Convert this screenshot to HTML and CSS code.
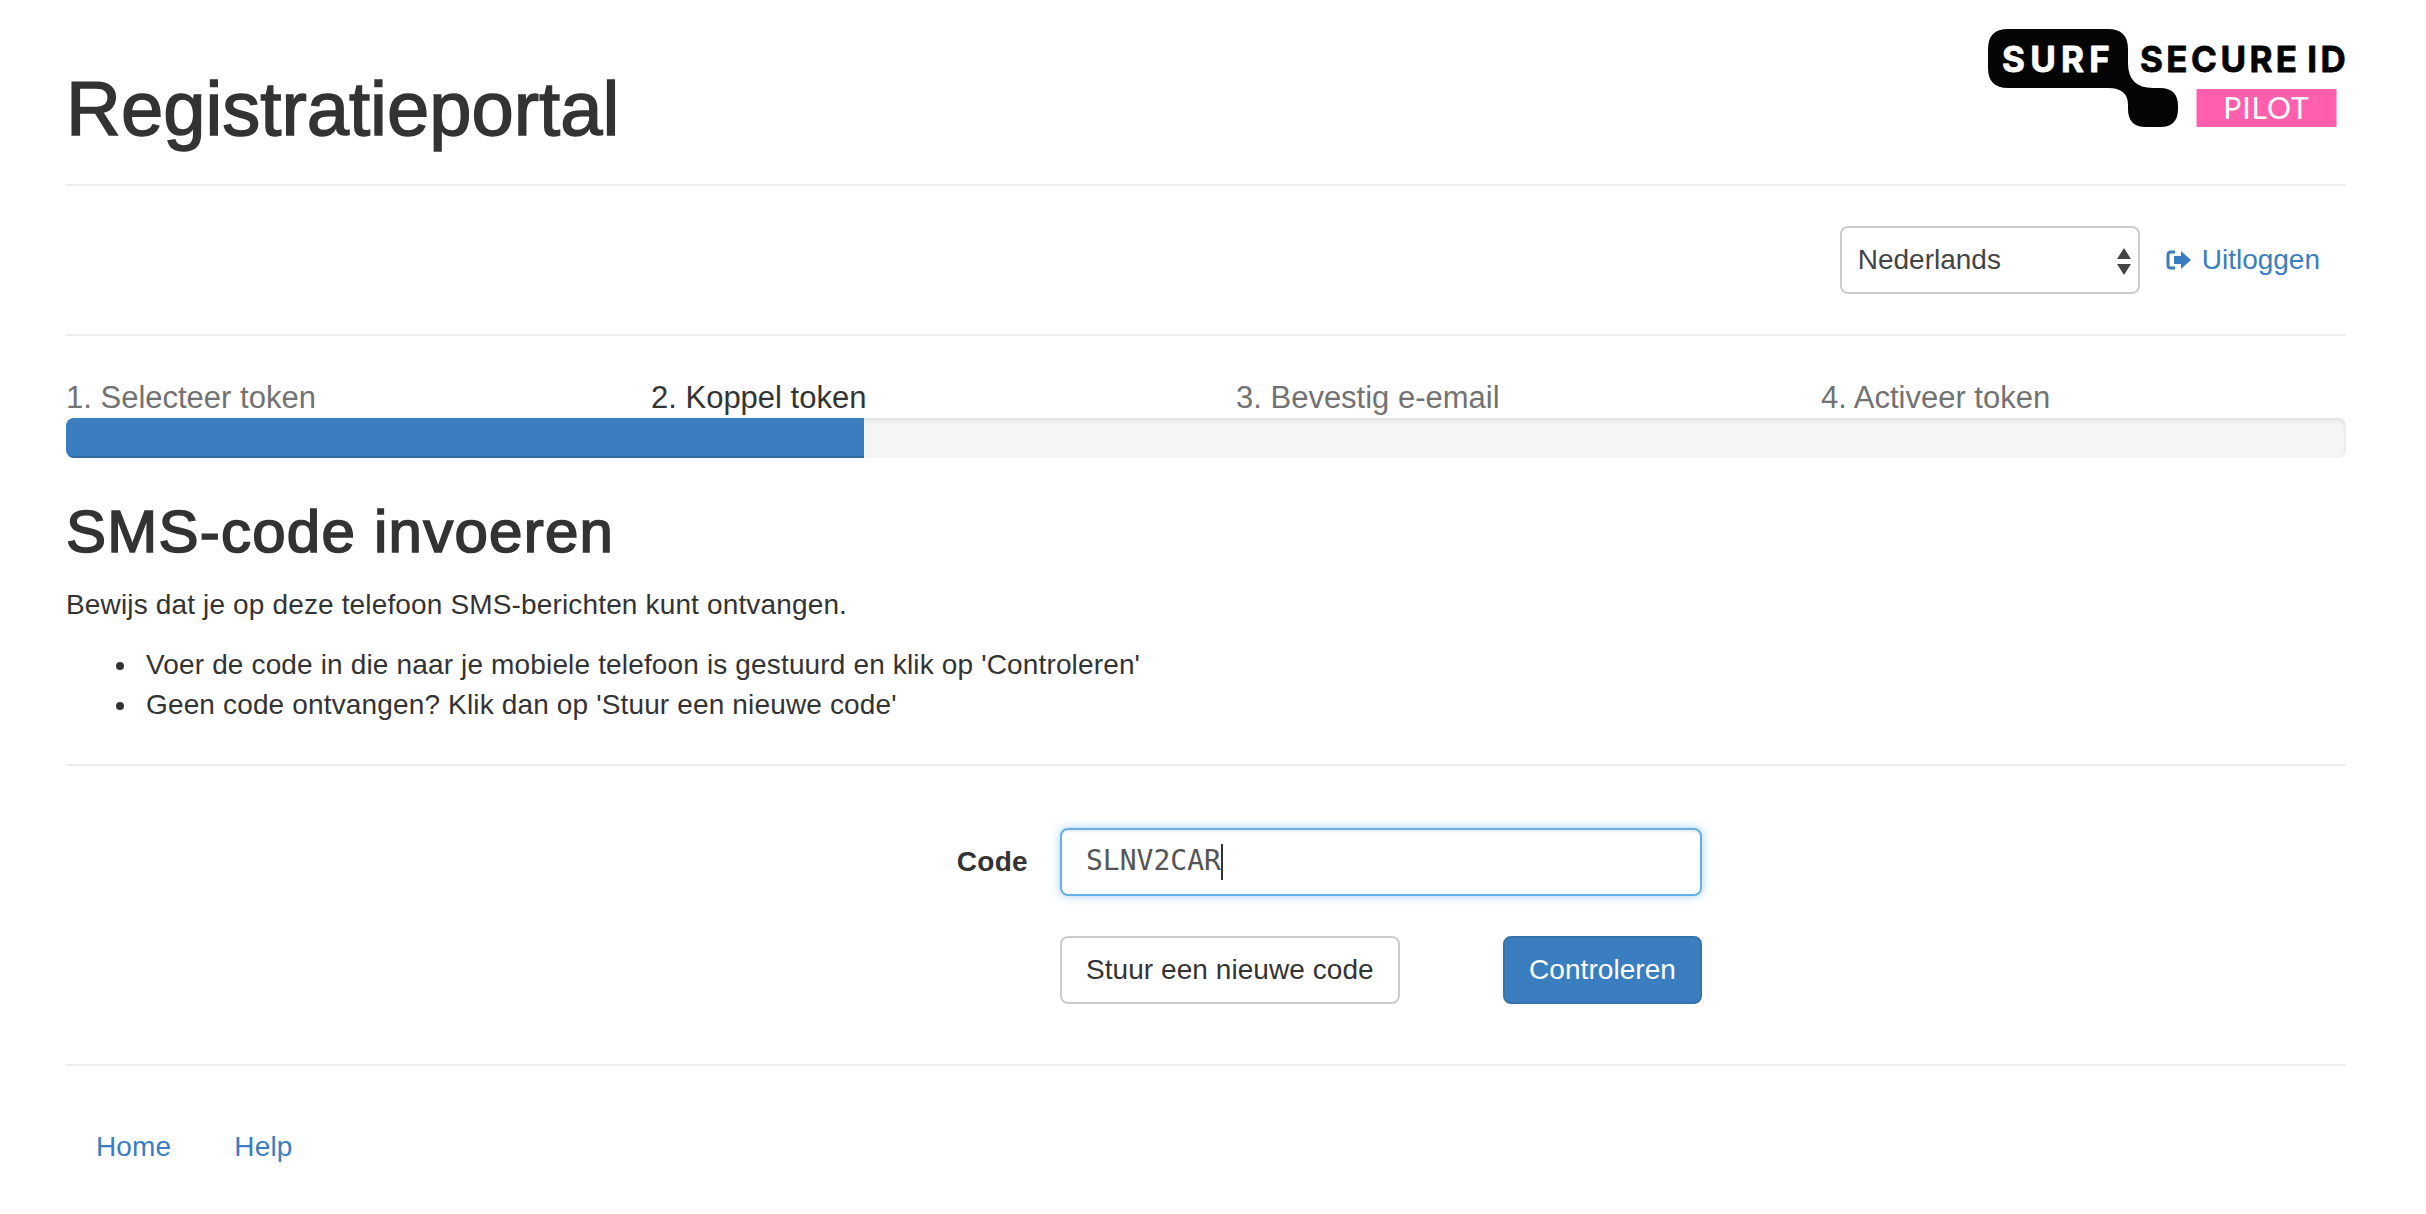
FILE: index.html
```html
<!DOCTYPE html>
<html lang="nl">
<head>
<meta charset="utf-8">
<title>Registratieportal</title>
<link rel="stylesheet" href="styles.css">
</head>
<body>
<div class="container">
  <header class="page-header">
    <h1 class="title">Registratieportal</h1>
    <svg class="logo" viewBox="0 0 360 100" width="360" height="100" role="img" aria-label="SURF Secure ID Pilot">
      <path class="logo-black" d="M22 0H122Q142 0 142 20V34Q142 59 167 59H174Q192 59 192 77V80Q192 98 174 98H160Q142 98 142 80V76Q142 59 122 59H22Q2 59 2 39V20Q2 0 22 0Z"/>
      <text class="logo-surf" x="16" y="43" textLength="108">SURF</text>
      <text class="logo-secure" x="154" y="43" textLength="206">SECURE ID</text>
      <rect class="logo-pink" x="210.5" y="60" width="140" height="38"/>
      <text class="logo-pilot" x="280.5" y="90">PILOT</text>
    </svg>
  </header>

  <nav class="account-bar">
    <div class="select-wrap">
      <select class="lang-select"><option>Nederlands</option><option>English</option></select>
      <span class="select-up"></span>
      <span class="select-down"></span>
    </div>
    <a class="logout" href="#">
      <svg class="logout-icon" viewBox="0 0 26 20" width="26" height="20">
        <path d="M9 2H5Q2 2 2 5V15Q2 18 5 18H9" fill="none" stroke="currentColor" stroke-width="3"/>
        <path d="M8 6H15V1L25 10L15 19V14H8Z" fill="currentColor"/>
      </svg>
      Uitloggen
    </a>
  </nav>

  <section class="steps">
    <div class="step-labels">
      <span class="step">1. Selecteer token</span>
      <span class="step active">2. Koppel token</span>
      <span class="step">3. Bevestig e-email</span>
      <span class="step">4. Activeer token</span>
    </div>
    <div class="progress"><div class="progress-bar"></div></div>
  </section>

  <h2 class="subtitle">SMS-code invoeren</h2>
  <p class="intro">Bewijs dat je op deze telefoon SMS-berichten kunt ontvangen.</p>
  <ul class="hints">
    <li>Voer de code in die naar je mobiele telefoon is gestuurd en klik op 'Controleren'</li>
    <li>Geen code ontvangen? Klik dan op 'Stuur een nieuwe code'</li>
  </ul>

  <form class="code-form">
    <label class="code-label" for="code">Code</label>
    <div class="input-wrap">
      <input class="code-input" id="code" type="text" value="SLNV2CAR">
      <span class="caret"></span>
    </div>
    <div class="actions">
      <button class="btn" type="button">Stuur een nieuwe code</button>
      <button class="btn btn-primary" type="button">Controleren</button>
    </div>
  </form>

  <footer class="page-footer">
    <a href="#">Home</a>
    <a href="#">Help</a>
  </footer>
</div>
</body>
</html>
```
FILE: styles.css
```css
* { box-sizing: border-box; }
html, body { margin: 0; padding: 0; background: #fff; }
body {
  font-family: "Liberation Sans", Arial, sans-serif;
  font-size: 28px;
  line-height: 40px;
  letter-spacing: 0.15px;
  color: #333;
  overflow: hidden;
}
a { color: #3a7ebf; text-decoration: none; }
.container { padding: 0 80px 0 66px; }

.page-header {
  height: 186px;
  border-bottom: 2px solid #eee;
  display: flex;
  justify-content: space-between;
  align-items: flex-start;
}
.title {
  margin: 69px 0 0;
  font-size: 76px;
  line-height: 80px;
  font-weight: 400;
  letter-spacing: 0;
  -webkit-text-stroke: 1.5px #333;
}
.logo { margin-top: 29px; flex: none; }
.logo-black { fill: #050505; }
.logo-surf { fill: #fff; stroke: #fff; stroke-width: 0.8px; stroke-linejoin: round; font: 700 35px "Inter", sans-serif; }
.logo-secure { fill: #050505; stroke: #050505; stroke-width: 0.8px; stroke-linejoin: round; font: 700 35px "Inter", sans-serif; word-spacing: -5px; }
.logo-pink { fill: #ff5fac; }
.logo-pilot { fill: #fff; font: 400 30px "Lato", sans-serif; text-anchor: middle; letter-spacing: 1px; }

.account-bar {
  height: 150px;
  border-bottom: 2px solid #eee;
  display: flex;
  justify-content: flex-end;
  align-items: center;
  gap: 26px;
  padding: 0 26px 0 0;
}
.select-wrap { position: relative; width: 300px; height: 68px; }
.lang-select {
  appearance: none;
  -webkit-appearance: none;
  width: 100%;
  height: 100%;
  padding: 0 16px;
  border: 2px solid #ccc;
  border-radius: 8px;
  background: #fff;
  color: #444;
  font: inherit;
}
.select-up, .select-down {
  position: absolute;
  right: 9px;
  width: 0;
  height: 0;
  border-left: 7px solid transparent;
  border-right: 7px solid transparent;
}
.select-up { top: 22px; border-bottom: 11px solid #444; }
.select-down { top: 38px; border-top: 11px solid #444; }
.logout { display: flex; align-items: center; gap: 10px; letter-spacing: 0; }
.logout-icon { flex: none; }

.steps { padding-top: 42px; }
.step-labels { display: grid; grid-template-columns: repeat(4, 585px); height: 40px; }
.step { color: #727272; font-size: 31px; letter-spacing: 0; line-height: 40px; white-space: nowrap; }
.step.active { color: #333; }
.progress {
  height: 40px;
  background: #f5f5f5;
  border-radius: 8px;
  overflow: hidden;
  box-shadow: inset 0 2px 4px rgba(0,0,0,.1);
}
.progress-bar {
  width: 35%;
  height: 100%;
  background: #3a7ebf;
  box-shadow: inset 0 -2px 0 rgba(0,0,0,.15);
}

.subtitle {
  margin: 41px 0 0;
  font-size: 60px;
  line-height: 66px;
  font-weight: 400;
  letter-spacing: 1.25px;
  -webkit-text-stroke: 1.7px #333;
}
.intro { margin: 20px 0 0; }
.hints {
  margin: 20px 0 0;
  padding: 0 0 39px 80px;
  list-style: none;
  border-bottom: 2px solid #eee;
}
.hints li { position: relative; }
.hints li::before {
  content: "";
  position: absolute;
  left: -30px;
  top: 17px;
  width: 8px;
  height: 8px;
  border-radius: 50%;
  background: #333;
}
.code-form {
  display: grid;
  grid-template-columns: 962px 642px;
  column-gap: 32px;
  row-gap: 40px;
  align-items: center;
  padding: 62px 0 60px;
  border-bottom: 2px solid #eee;
}
.code-label { font-weight: 700; text-align: right; letter-spacing: 0.3px; }
.input-wrap { position: relative; height: 68px; }
.code-input {
  width: 100%;
  height: 100%;
  padding: 0 24px 3px;
  border: 2px solid #66afe9;
  border-radius: 8px;
  outline: 0;
  box-shadow: inset 0 2px 2px rgba(0,0,0,.075), 0 0 10px rgba(102,175,233,.6);
  font: 28px "DejaVu Sans Mono", monospace;
  color: #555;
}
.caret {
  position: absolute;
  left: 161px;
  top: 16px;
  width: 2px;
  height: 36px;
  background: #333;
}
.actions {
  grid-column: 2;
  display: flex;
  justify-content: space-between;
}
.btn {
  height: 68px;
  padding: 0 24px;
  border: 2px solid #ccc;
  border-radius: 8px;
  background: #fff;
  color: #333;
  font: inherit;
  letter-spacing: 0.06px;
}
.btn-primary { background: #3a7ebf; border-color: #3673ae; color: #fff; }

.page-footer {
  display: flex;
  gap: 63px;
  padding: 61px 0 0 30px;
}
```
